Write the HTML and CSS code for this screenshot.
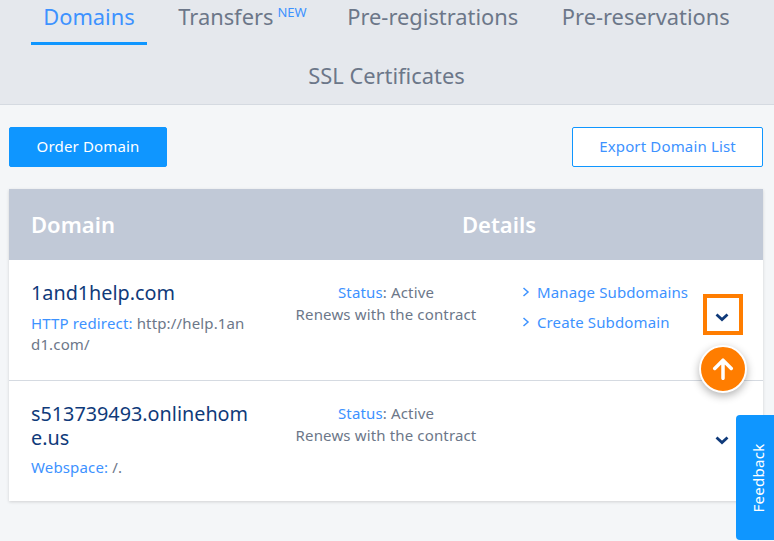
FILE: index.html
```html
<!DOCTYPE html>
<html lang="en">
<head>
<meta charset="utf-8">
<title>Domains</title>
<link rel="stylesheet" href="styles.css">
</head>
<body>
<nav class="tabs">
  <a class="tab active">Domains</a>
  <a class="tab">Transfers<sup class="new">NEW</sup></a>
  <a class="tab">Pre-registrations</a>
  <a class="tab">Pre-reservations</a>
  <a class="tab">SSL Certificates</a>
</nav>
<main class="content">
  <div class="toolbar">
    <a class="btn btn-primary">Order Domain</a>
    <a class="btn btn-outline">Export Domain List</a>
  </div>
  <section class="table">
    <div class="thead">
      <div class="th-domain">Domain</div>
      <div class="th-details">Details</div>
    </div>
    <div class="row">
      <div class="cell-domain">
        <div class="name">1and1help.com</div>
        <div class="meta"><span class="label">HTTP redirect:</span> http://help.1and1.com/</div>
      </div>
      <div class="cell-status">
        <div><span class="label">Status</span>: Active</div>
        <div>Renews with the contract</div>
      </div>
      <div class="cell-links">
        <a class="link"><svg class="caret" viewBox="0 0 8 10"><path d="M1.5 1 L6 5 L1.5 9" /></svg>Manage Subdomains</a>
        <a class="link"><svg class="caret" viewBox="0 0 8 10"><path d="M1.5 1 L6 5 L1.5 9" /></svg>Create Subdomain</a>
      </div>
      <button class="toggle focused"><svg class="chev" viewBox="0 0 14 9"><path d="M1.5 1.5 L7 6.5 L12.5 1.5" /></svg></button>
    </div>
    <div class="row">
      <div class="cell-domain">
        <div class="name">s513739493.onlinehome.us</div>
        <div class="meta"><span class="label">Webspace:</span> /.</div>
      </div>
      <div class="cell-status">
        <div><span class="label">Status</span>: Active</div>
        <div>Renews with the contract</div>
      </div>
      <div class="cell-links"></div>
      <button class="toggle"><svg class="chev" viewBox="0 0 14 9"><path d="M1.5 1.5 L7 6.5 L12.5 1.5" /></svg></button>
    </div>
  </section>
</main>
<button class="to-top"><svg viewBox="0 0 20 20"><path d="M10 18.5 V2.5 M2.5 9.5 L10 2 L17.5 9.5" /></svg></button>
<a class="feedback"><span>Feedback</span></a>
</body>
</html>
```
FILE: styles.css
```css
* { box-sizing: border-box; }
html, body { margin: 0; height: 541px; overflow: hidden; }
body {
  position: relative;
  background: #f4f6f8;
  font-family: "Noto Sans", sans-serif;
  font-size: 14px;
  color: #718096;
}
.tabs {
  height: 105px;
  background: #e5e8ed;
  border-bottom: 1px solid #d5dae1;
  display: flex;
  flex-wrap: wrap;
  justify-content: center;
  align-content: flex-start;
  column-gap: 19.6px;
  padding-right: 1px;
}
.tab {
  height: 45px;
  line-height: 33px;
  padding: 0 12px;
  font-size: 21.85px;
  color: #6c7789;
  white-space: nowrap;
  margin-bottom: 14px;
}
.tab.active {
  color: #3d92ff;
  border-bottom: 3px solid #0f96ff;
}
.new {
  font-size: 13px;
  color: #3d92ff;
  line-height: 0;
  margin-left: 4px;
  margin-right: -3px;
  vertical-align: 8px;
}
.content { padding: 22px 11px 0 9px; }
.toolbar {
  display: flex;
  justify-content: space-between;
  margin-bottom: 22px;
}
.btn {
  height: 40px;
  line-height: 36px;
  border-radius: 2px;
  font-size: 15px;
  letter-spacing: .15px;
  text-align: center;
  border: 1px solid #0f96ff;
}
.btn-primary { width: 158px; background: #0f96ff; color: #fff; }
.btn-outline { width: 191px; background: #fff; color: #3d92ff; }
.table {
  background: #fff;
  box-shadow: 0 1px 3px rgba(0, 0, 0, .15);
}
.thead {
  height: 71px;
  background: #c1c9d7;
  display: flex;
  align-items: center;
  color: #fff;
  font-size: 22px;
  font-weight: 600;
  padding: 0 0 2px 22px;
}
.th-domain { width: 204px; }
.th-details { flex: 1; text-align: center; }
.row {
  height: 121px;
  display: flex;
  padding: 21px 0 0 22px;
  border-bottom: 1px solid #d5dae1;
  position: relative;
}
.row:last-child { height: 120px; border-bottom: 0; }
.cell-domain { width: 219px; word-break: break-all; }
.name {
  font-size: 19.8px;
  line-height: 24px;
  color: #0f3a7a;
  margin-bottom: 8px;
}
.row:last-child .name { margin-bottom: 7px; }
.meta { line-height: 21px; font-size: 15px; letter-spacing: .15px; color: #6c7789; }
.label { color: #3d92ff; }
.cell-status {
  width: 242px;
  margin-left: 15px;
  text-align: center;
  font-size: 15px;
  letter-spacing: .15px;
  line-height: 22px;
  color: #6c7789;
}
.cell-links {
  flex: 1;
  padding-left: 15px;
  display: flex;
  flex-direction: column;
  gap: 8px;
}
.link {
  display: flex;
  align-items: center;
  gap: 7px;
  font-size: 15px;
  letter-spacing: .12px;
  line-height: 22px;
  color: #3d92ff;
  white-space: nowrap;
}
.caret { width: 8px; height: 10px; }
.caret path { fill: none; stroke: #3d92ff; stroke-width: 1.5; }
.toggle {
  position: absolute;
  right: 20px;
  top: 34px;
  width: 40px;
  height: 41px;
  background: none;
  border: 0;
  padding: 5px 2px 0 0;
  display: flex;
  align-items: center;
  justify-content: center;
}
.toggle.focused { border: 4px solid #ff7d00; }
.row:last-child .toggle { top: 36px; }
.chev { width: 14px; height: 9px; }
.chev path { fill: none; stroke: #0f3a7a; stroke-width: 2.8; }
.to-top {
  position: absolute;
  left: 699px;
  top: 345px;
  width: 48px;
  height: 48px;
  border-radius: 50%;
  background: #ff7d00;
  border: 2px solid #fff;
  box-shadow: 0 3px 8px rgba(0, 0, 0, .3);
  padding: 11px;
  display: flex;
}
.to-top svg { width: 100%; height: 100%; }
.to-top path { fill: none; stroke: #fff; stroke-width: 3.2; stroke-linecap: round; stroke-linejoin: round; }
.feedback {
  position: absolute;
  left: 736px;
  top: 415px;
  width: 38px;
  height: 125px;
  background: #0f96ff;
  border-radius: 4px 0 0 4px;
  display: flex;
  align-items: center;
  justify-content: center;
  padding-left: 5px;
  color: #fff;
  font-size: 15px;
  letter-spacing: .3px;
}
.feedback span { transform: rotate(-90deg); white-space: nowrap; }
```
